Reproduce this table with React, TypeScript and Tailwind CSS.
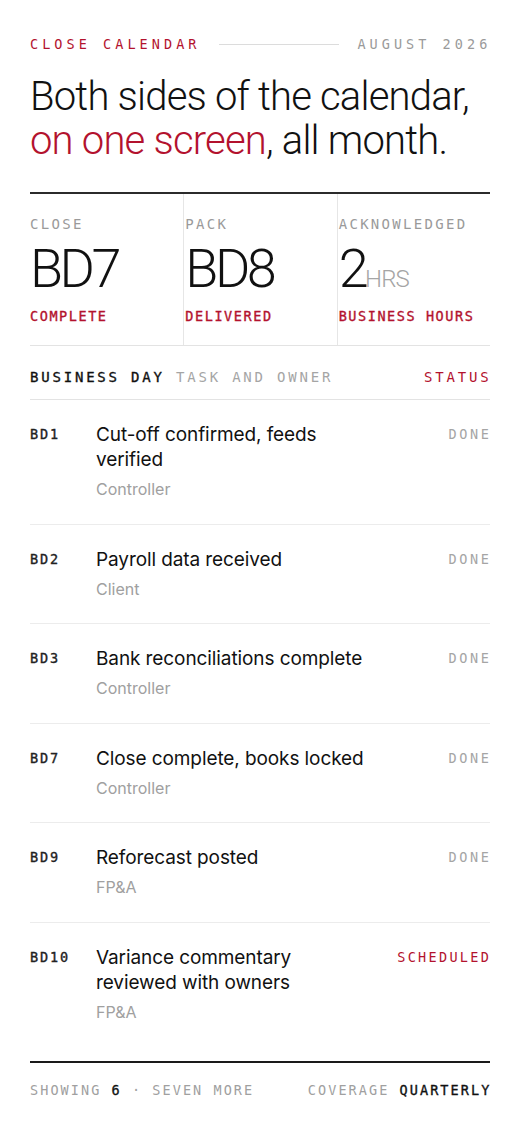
import React from 'react';

const mono = "font-['DejaVu_Sans_Mono','Liberation_Mono',monospace]";
const sans = "font-['Inter','Liberation_Sans',sans-serif]";
const light = "font-['Roboto','Liberation_Sans',sans-serif]";
const heavy = '[-webkit-text-stroke:0.35px_currentColor]';

type Row = {
	day: string;
	task: string;
	owner: string;
	status: 'DONE' | 'SCHEDULED';
};

const rows: Row[] = [
	{ day: 'BD1', task: 'Cut-off confirmed, feeds verified', owner: 'Controller', status: 'DONE' },
	{ day: 'BD2', task: 'Payroll data received', owner: 'Client', status: 'DONE' },
	{ day: 'BD3', task: 'Bank reconciliations complete', owner: 'Controller', status: 'DONE' },
	{ day: 'BD7', task: 'Close complete, books locked', owner: 'Controller', status: 'DONE' },
	{ day: 'BD9', task: 'Reforecast posted', owner: 'FP&A', status: 'DONE' },
	{ day: 'BD10', task: 'Variance commentary reviewed with owners', owner: 'FP&A', status: 'SCHEDULED' },
];

const Stat = ({
	label,
	value,
	unit,
	note,
	first,
}: {
	label: string;
	value: string;
	unit?: string;
	note: string;
	first?: boolean;
}) => (
	<div className={`pt-[22px] pb-[21px] ${first ? '' : 'border-l border-[#e6e6e6] pl-[1px]'}`}>
		<div className={`${mono} text-[14px] leading-[16px] tracking-[0.165em] text-[#9a9a9a]`}>{label}</div>
		<div className={`${light} mt-[10px] h-[54px] text-[54px] leading-[54px] font-light tracking-[-0.065em] text-[#111]`}>
			{value}
			{unit && <span className="text-[24px] leading-[0] tracking-[-0.04em] text-[#a5a5a5]">{unit}</span>}
		</div>
		<div className={`${mono} ${heavy} mt-[12px] text-[13.5px] leading-[16px] tracking-[0.116em] text-[#b3122e]`}>
			{note}
		</div>
	</div>
);

export default function App() {
	return (
		<div className="min-h-[1125px] bg-white px-[30px] pt-[36px] pb-[20px]">
			{/* eyebrow */}
			<div className={`${mono} flex items-center gap-[18px] text-[13.5px] leading-[16px] tracking-[0.3em]`}>
				<span className="text-[#b3122e]">CLOSE CALENDAR</span>
				<span className="h-px flex-1 bg-[#dcdcdc]" />
				<span className="-mr-[0.1em] text-[#9a9a9a]">AUGUST 2026</span>
			</div>

			<h1 className={`${light} mt-[23px] text-[40px] leading-[44px] font-light tracking-[-0.02em] text-[#111]`}>
				Both sides of the calendar,
				<br />
				<span className="text-[#b3122e]">on one screen</span>, all month.
			</h1>

			{/* stats */}
			<div className="mt-[29px] grid grid-cols-3 border-t-2 border-b border-t-[#2b2b2b] border-b-[#e3e3e3]">
				<Stat label="CLOSE" value="BD7" note="COMPLETE" first />
				<Stat label="PACK" value="BD8" note="DELIVERED" />
				<Stat label="ACKNOWLEDGED" value="2" unit="HRS" note="BUSINESS HOURS" />
			</div>

			{/* table head */}
			<div
				className={`${mono} flex items-center justify-between border-b border-[#e3e3e3] pt-[22px] pb-[13px] text-[14px] leading-[18px] tracking-[0.2em]`}
			>
				<span>
					<span className={`${heavy} text-[#111]`}>BUSINESS DAY</span>{' '}
					<span className="text-[#a5a5a5]">TASK AND OWNER</span>
				</span>
				<span className="-mr-[0.1em] text-[#b3122e]">STATUS</span>
			</div>

			{/* rows */}
			<div>
				{rows.map((row, i) => (
					<div
						key={row.day}
						className={`grid grid-cols-[66px_276px_1fr] pt-[22px] pb-[23.5px] ${
							i < rows.length - 1 ? 'border-b border-[#ececec]' : ''
						}`}
					>
						<div className={`${mono} ${heavy} pt-[3px] text-[13.5px] leading-[18px] tracking-[0.14em] text-[#222]`}>
							{row.day}
						</div>
						<div className={sans}>
							<div className="text-[19px] leading-[25px] tracking-[-0.005em] text-[#111]">{row.task}</div>
							<div className="mt-[6px] text-[16px] leading-[22px] text-[#a0a0a0]">{row.owner}</div>
						</div>
						<div
							className={`${mono} pt-[3px] text-right text-[13.5px] leading-[18px] ${
								row.status === 'DONE'
									? 'tracking-[0.19em] -mr-[0.1em] text-[#a5a5a5]'
									: 'tracking-[0.17em] -mr-[0.08em] text-[#b3122e]'
							}`}
						>
							{row.status}
						</div>
					</div>
				))}
			</div>

			{/* footer */}
			<div
				className={`${mono} mt-[15px] flex items-center justify-between border-t-2 border-[#1a1a1a] pt-[18px] text-[13.5px] leading-[18px] tracking-[0.153em] text-[#a0a0a0]`}
			>
				<span>
					SHOWING <span className={`${heavy} text-[#111]`}>6</span> · SEVEN MORE
				</span>
				<span className="-mr-[0.1em]">
					COVERAGE <span className={`${heavy} text-[#111]`}>QUARTERLY</span>
				</span>
			</div>
		</div>
	);
}
